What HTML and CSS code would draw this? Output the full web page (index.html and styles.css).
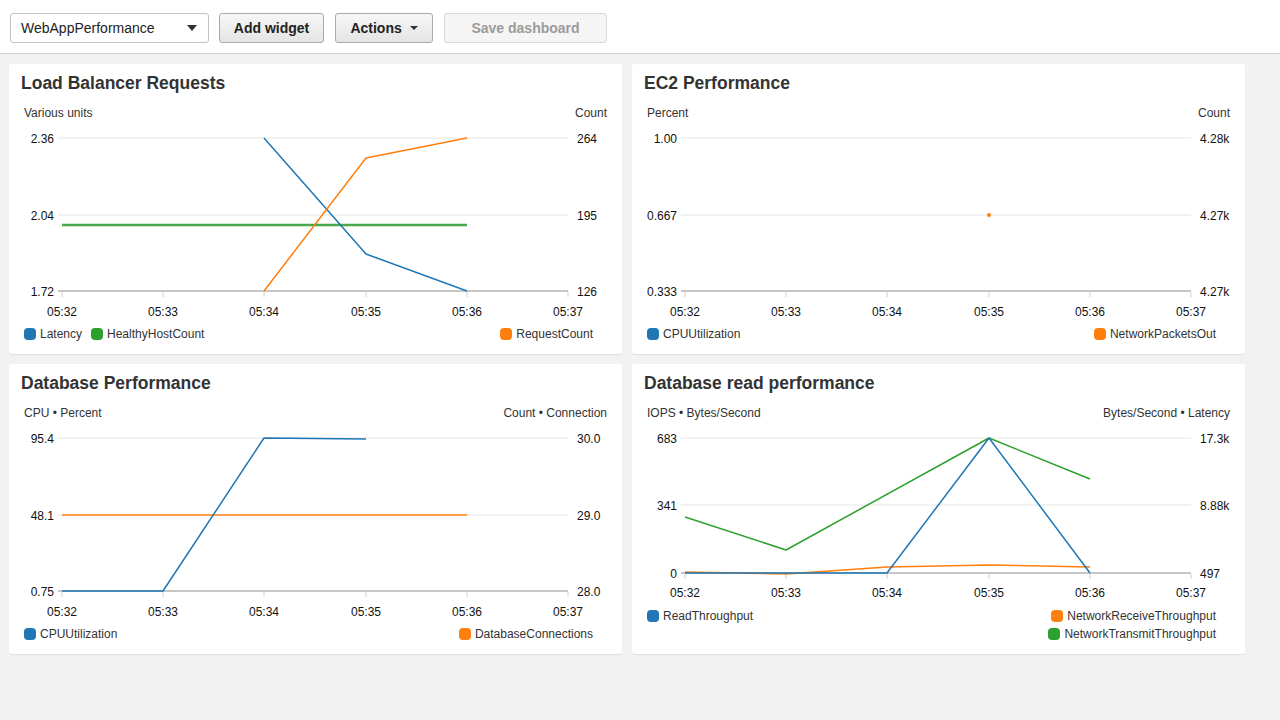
FILE: index.html
```html
<!DOCTYPE html>
<html>
<head>
<meta charset="utf-8">
<link rel="stylesheet" href="styles.css">
</head>
<body>
<header class="toolbar">
  <div class="select"><span>WebAppPerformance</span><i class="caret caret-lg"></i></div>
  <button class="btn btn-add">Add widget</button>
  <button class="btn btn-actions">Actions <i class="caret caret-sm"></i></button>
  <button class="btn btn-save" disabled>Save dashboard</button>
</header>

<main class="grid">
  <section class="panel">
    <h2 class="title">Load Balancer Requests</h2>
    <div class="units"><span>Various units</span><span>Count</span></div>
    <svg class="chart" width="613" height="205" viewBox="9 119 613 205">
      <g class="grid-lines"><line x1="58" y1="138" x2="568" y2="138"/><line x1="58" y1="215" x2="568" y2="215"/></g>
      <line class="axis" x1="58" y1="291" x2="568" y2="291"/>
      <g class="ticks"><line x1="62" y1="292" x2="62" y2="297"/><line x1="163" y1="292" x2="163" y2="297"/><line x1="264" y1="292" x2="264" y2="297"/><line x1="366" y1="292" x2="366" y2="297"/><line x1="467" y1="292" x2="467" y2="297"/><line x1="568" y1="292" x2="568" y2="297"/></g>
      <g class="lbl-l"><text x="54" y="143">2.36</text><text x="54" y="220">2.04</text><text x="54" y="296">1.72</text></g>
      <g class="lbl-r"><text x="577" y="143">264</text><text x="577" y="220">195</text><text x="577" y="296">126</text></g>
      <g class="lbl-x"><text x="62" y="316">05:32</text><text x="163" y="316">05:33</text><text x="264" y="316">05:34</text><text x="366" y="316">05:35</text><text x="467" y="316">05:36</text><text x="568" y="316">05:37</text></g>
      <polyline class="s-green thick" points="62,225 467,225"/>
      <polyline class="s-blue" points="264,138 366,254 467,291"/>
      <polyline class="s-orange" points="264,291 366,158 467,138"/>
    </svg>
    <div class="legend">
      <div class="legend-col"><div class="legend-row"><span class="item"><i class="sw blue"></i>Latency</span><span class="item"><i class="sw green"></i>HealthyHostCount</span></div></div>
      <div class="legend-col right"><span class="item"><i class="sw orange"></i>RequestCount</span></div>
    </div>
  </section>

  <section class="panel">
    <h2 class="title">EC2 Performance</h2>
    <div class="units"><span>Percent</span><span>Count</span></div>
    <svg class="chart" width="613" height="205" viewBox="632 119 613 205">
      <g class="grid-lines"><line x1="681" y1="138" x2="1191" y2="138"/><line x1="681" y1="215" x2="1191" y2="215"/></g>
      <line class="axis" x1="681" y1="291" x2="1191" y2="291"/>
      <g class="ticks"><line x1="685" y1="292" x2="685" y2="297"/><line x1="786" y1="292" x2="786" y2="297"/><line x1="887" y1="292" x2="887" y2="297"/><line x1="989" y1="292" x2="989" y2="297"/><line x1="1090" y1="292" x2="1090" y2="297"/><line x1="1191" y1="292" x2="1191" y2="297"/></g>
      <g class="lbl-l"><text x="677" y="143">1.00</text><text x="677" y="220">0.667</text><text x="677" y="296">0.333</text></g>
      <g class="lbl-r"><text x="1200" y="143">4.28k</text><text x="1200" y="220">4.27k</text><text x="1200" y="296">4.27k</text></g>
      <g class="lbl-x"><text x="685" y="316">05:32</text><text x="786" y="316">05:33</text><text x="887" y="316">05:34</text><text x="989" y="316">05:35</text><text x="1090" y="316">05:36</text><text x="1191" y="316">05:37</text></g>
      <circle cx="989" cy="215" r="2" fill="#ff7f0e"/>
    </svg>
    <div class="legend">
      <div class="legend-col"><span class="item"><i class="sw blue"></i>CPUUtilization</span></div>
      <div class="legend-col right"><span class="item"><i class="sw orange"></i>NetworkPacketsOut</span></div>
    </div>
  </section>

  <section class="panel">
    <h2 class="title">Database Performance</h2>
    <div class="units"><span>CPU • Percent</span><span>Count • Connection</span></div>
    <svg class="chart" width="613" height="205" viewBox="9 419 613 205">
      <g class="grid-lines"><line x1="58" y1="438" x2="568" y2="438"/><line x1="58" y1="515" x2="568" y2="515"/></g>
      <line class="axis" x1="58" y1="591" x2="568" y2="591"/>
      <g class="ticks"><line x1="62" y1="592" x2="62" y2="597"/><line x1="163" y1="592" x2="163" y2="597"/><line x1="264" y1="592" x2="264" y2="597"/><line x1="366" y1="592" x2="366" y2="597"/><line x1="467" y1="592" x2="467" y2="597"/><line x1="568" y1="592" x2="568" y2="597"/></g>
      <g class="lbl-l"><text x="54" y="443">95.4</text><text x="54" y="520">48.1</text><text x="54" y="596">0.75</text></g>
      <g class="lbl-r"><text x="577" y="443">30.0</text><text x="577" y="520">29.0</text><text x="577" y="596">28.0</text></g>
      <g class="lbl-x"><text x="62" y="616">05:32</text><text x="163" y="616">05:33</text><text x="264" y="616">05:34</text><text x="366" y="616">05:35</text><text x="467" y="616">05:36</text><text x="568" y="616">05:37</text></g>
      <polyline class="s-orange" points="62,515 467,515"/>
      <polyline class="s-blue" points="62,591 163,591 264,438 366,439"/>
    </svg>
    <div class="legend">
      <div class="legend-col"><span class="item"><i class="sw blue"></i>CPUUtilization</span></div>
      <div class="legend-col right"><span class="item"><i class="sw orange"></i>DatabaseConnections</span></div>
    </div>
  </section>

  <section class="panel">
    <h2 class="title">Database read performance</h2>
    <div class="units"><span>IOPS • Bytes/Second</span><span>Bytes/Second • Latency</span></div>
    <svg class="chart" width="613" height="187" viewBox="632 419 613 187">
      <g class="grid-lines"><line x1="681" y1="438" x2="1191" y2="438"/><line x1="681" y1="505" x2="1191" y2="505"/></g>
      <line class="axis" x1="681" y1="573" x2="1191" y2="573"/>
      <g class="ticks"><line x1="685" y1="574" x2="685" y2="579"/><line x1="786" y1="574" x2="786" y2="579"/><line x1="887" y1="574" x2="887" y2="579"/><line x1="989" y1="574" x2="989" y2="579"/><line x1="1090" y1="574" x2="1090" y2="579"/><line x1="1191" y1="574" x2="1191" y2="579"/></g>
      <g class="lbl-l"><text x="677" y="443">683</text><text x="677" y="510">341</text><text x="677" y="578">0</text></g>
      <g class="lbl-r"><text x="1200" y="443">17.3k</text><text x="1200" y="510">8.88k</text><text x="1200" y="578">497</text></g>
      <g class="lbl-x"><text x="685" y="597">05:32</text><text x="786" y="597">05:33</text><text x="887" y="597">05:34</text><text x="989" y="597">05:35</text><text x="1090" y="597">05:36</text><text x="1191" y="597">05:37</text></g>
      <polyline class="s-green" points="685,517 786,550 989,438 1090,479"/>
      <polyline class="s-orange" points="685,572 786,574 887,567 989,565 1090,567"/>
      <polyline class="s-blue" points="685,573 786,573 887,573 989,438 1090,573"/>
    </svg>
    <div class="legend">
      <div class="legend-col"><span class="item"><i class="sw blue"></i>ReadThroughput</span></div>
      <div class="legend-col right"><span class="item"><i class="sw orange"></i>NetworkReceiveThroughput</span><span class="item"><i class="sw green"></i>NetworkTransmitThroughput</span></div>
    </div>
  </section>
</main>
</body>
</html>
```

FILE: styles.css
```css
* { box-sizing: border-box; }
html, body { margin: 0; padding: 0; }
body {
  background: #f2f2f2;
  font-family: "Liberation Sans", Arial, sans-serif;
  color: #333;
  width: 1280px;
  height: 720px;
  overflow: hidden;
}
.toolbar {
  height: 54px;
  background: #fff;
  border-bottom: 1px solid #cfcfcf;
  display: flex;
  align-items: flex-start;
  padding: 13px 0 0 10px;
  gap: 10px;
}
.select {
  width: 199px;
  height: 30px;
  border: 1px solid #c4c4c4;
  border-radius: 3px;
  background: #fff;
  display: flex;
  align-items: center;
  justify-content: space-between;
  padding: 0 11px 0 10px;
  font-size: 14px;
  color: #222;
}
.caret {
  display: inline-block;
  width: 0; height: 0;
  border-left-style: solid; border-right-style: solid; border-top-style: solid;
  border-left-color: transparent; border-right-color: transparent;
  border-top-color: #333;
}
.caret-lg { border-width: 6px 5.5px 0 5.5px; }
.caret-sm { border-width: 4px 4px 0 4px; margin-left: 4px; vertical-align: middle; position: relative; top: -1px; }
.btn {
  height: 30px;
  border: 1px solid #a9a9a9;
  border-radius: 3px;
  background: linear-gradient(#f7f7f7, #e4e4e4);
  font-family: "Liberation Sans", Arial, sans-serif;
  font-weight: bold;
  font-size: 14px;
  color: #222;
  padding: 0;
  margin: 0;
}
.btn-add { width: 105px; }
.btn-actions { width: 98px; margin-left: 1px; }
.btn-save {
  width: 163px;
  margin-left: 1px;
  background: #f5f5f5;
  border-color: #d8d8d8;
  color: #9b9b9b;
}
.grid {
  display: grid;
  grid-template-columns: 613px 613px;
  grid-auto-rows: 290px;
  gap: 10px;
  padding: 10px 0 0 9px;
}
.panel {
  background: #fff;
  border-radius: 3px;
  box-shadow: 0 1px 1px rgba(0,0,0,0.08);
  display: flex;
  flex-direction: column;
  padding: 9px 0 11px 0;
}
.title {
  margin: 0;
  padding-left: 12px;
  font-size: 17.5px;
  line-height: 20px;
  font-weight: bold;
  color: #333;
}
.units {
  margin-top: 13px;
  display: flex;
  justify-content: space-between;
  padding: 0 15px;
  font-size: 12px;
  line-height: 14px;
  color: #333;
}
.chart { display: block; flex: none; margin-top: -1px; }
.grid-lines line { stroke: #e6e6e6; stroke-width: 1; }
.axis { stroke: #c6c6c6; stroke-width: 2; }
.ticks line { stroke: #cfcfcf; stroke-width: 1; }
.chart text { font-family: "Liberation Sans", Arial, sans-serif; font-size: 12px; fill: #111; }
.lbl-l text { text-anchor: end; }
.lbl-r text { text-anchor: start; }
.lbl-x text { text-anchor: middle; }
polyline { fill: none; stroke-width: 1.5; stroke-linejoin: round; }
.s-blue { stroke: #1f77b4; }
.s-green { stroke: #2ca02c; }
.s-orange { stroke: #ff7f0e; }
.thick { stroke-width: 2.5; stroke: #4aa84a; }
.legend {
  margin-top: auto;
  display: flex;
  justify-content: space-between;
  padding: 0 29px 0 15px;
  font-size: 12px;
  line-height: 18px;
  color: #333;
}
.legend-col { display: flex; flex-direction: column; }
.legend-col.right { align-items: flex-end; }
.legend-row { display: flex; gap: 9px; }
.item { display: flex; align-items: center; }
.sw {
  width: 12px; height: 12px;
  border-radius: 4px;
  margin-right: 4px;
  display: inline-block;
}
.sw.blue { background: #1f77b4; }
.sw.green { background: #2ca02c; }
.sw.orange { background: #ff7f0e; }
```
